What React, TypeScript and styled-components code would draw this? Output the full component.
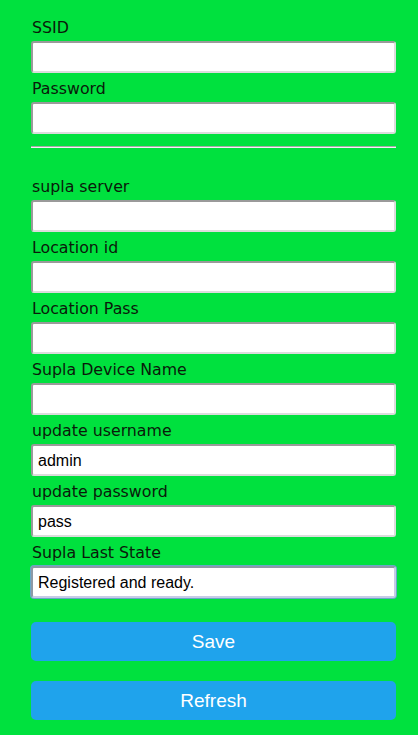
import React from "react";
import styled, { createGlobalStyle, css } from "styled-components";

const GlobalStyle = createGlobalStyle`
  html, body {
    margin: 0;
    padding: 0;
    background: #00e13e;
  }
  body {
    font-family: "DejaVu Sans", Verdana, sans-serif;
  }
`;

const Page = styled.div`
  min-height: 735px;
  background: #00e13e;
  box-sizing: border-box;
  padding: 18px 22px 14px 31px;
  display: flex;
  flex-direction: column;
`;

const Section = styled.div`
  display: flex;
  flex-direction: column;
  gap: 6px;
`;

const Field = styled.div`
  display: flex;
  flex-direction: column;
  gap: 4px;
`;

const Label = styled.label`
  font-family: "DejaVu Sans", Verdana, sans-serif;
  font-size: 15.8px;
  line-height: 19px;
  color: #0a1a0a;
  padding-left: 1px;
`;

const Input = styled.input<{ $active?: boolean }>`
  box-sizing: border-box;
  width: 365px;
  height: 32px;
  margin: 0;
  padding: 1px 5px 0;
  font-family: "Liberation Sans", Arial, sans-serif;
  font-size: 16px;
  color: #000;
  background: #fff;
  border-radius: 3px;
  border-width: 2px;
  border-style: solid;
  border-color: #9a9a9a #dcdcdc #dcdcdc #9a9a9a;
  outline: none;
  ${(p) =>
    p.$active &&
    css`
      border-color: #8d9aa6 #c6cbe6 #c6cbe6 #8d9aa6;
      box-shadow: 0 0 0 1px #6aa7c9;
    `}
`;

const Divider = styled.hr`
  width: 365px;
  margin: 12px 0 29px;
  border: 0;
  border-top: 1px solid #a8a8a8;
  border-bottom: 1px solid #f4f4f4;
  height: 0;
`;

const Buttons = styled.div`
  display: flex;
  flex-direction: column;
  gap: 20px;
  margin-top: 24px;
`;

const Button = styled.button`
  width: 365px;
  height: 39px;
  border: 0;
  border-radius: 5px;
  background: #1fa3ec;
  color: #fff;
  font-family: "Liberation Sans", Arial, sans-serif;
  font-size: 19px;
  line-height: 39px;
  padding: 0;
  cursor: pointer;
`;

type F = { label: string; value?: string; active?: boolean };

const wifi: F[] = [{ label: "SSID" }, { label: "Password" }];
const supla: F[] = [
  { label: "supla server" },
  { label: "Location id" },
  { label: "Location Pass" },
  { label: "Supla Device Name" },
  { label: "update username", value: "admin" },
  { label: "update password", value: "pass" },
  { label: "Supla Last State", value: "Registered and ready.", active: true },
];

const renderFields = (list: F[]) =>
  list.map((f) => (
    <Field key={f.label}>
      <Label>{f.label}</Label>
      <Input $active={f.active} defaultValue={f.value ?? ""} />
    </Field>
  ));

export default function App() {
  return (
    <>
      <GlobalStyle />
      <Page>
        <Section>{renderFields(wifi)}</Section>
        <Divider />
        <Section>{renderFields(supla)}</Section>
        <Buttons>
          <Button>Save</Button>
          <Button>Refresh</Button>
        </Buttons>
      </Page>
    </>
  );
}
